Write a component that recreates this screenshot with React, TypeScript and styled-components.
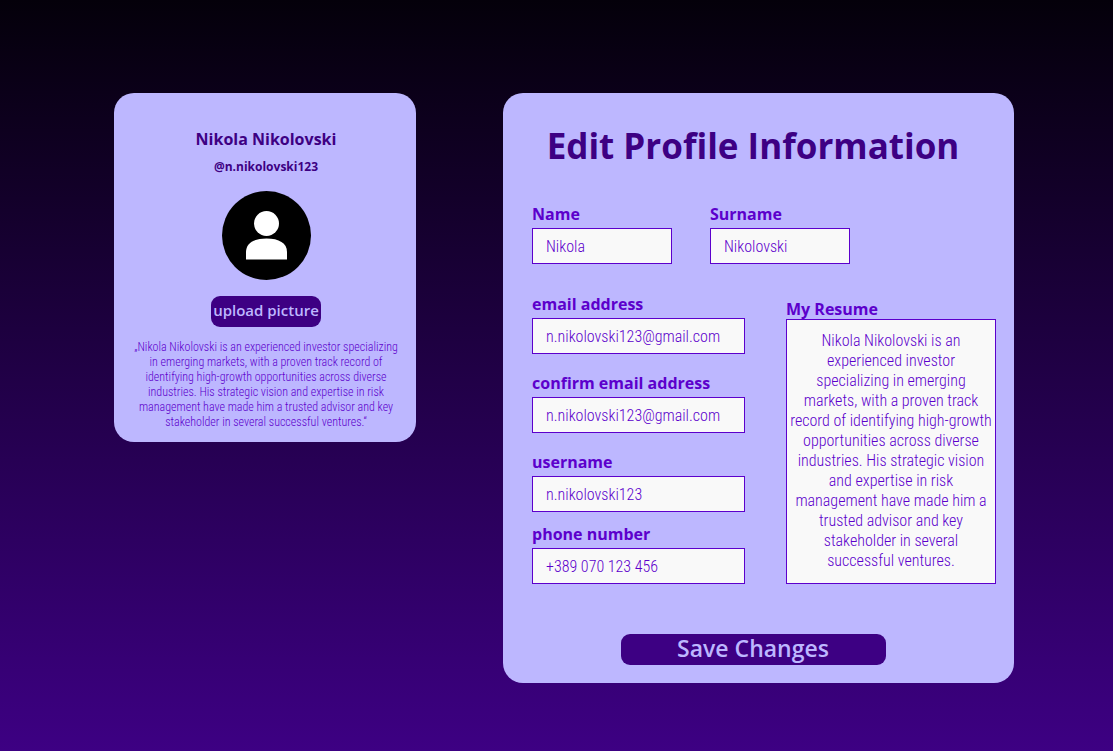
import React from "react";
import styled, { createGlobalStyle } from "styled-components";

const color = {
  card: "#bdb7ff",
  deep: "#3d0083",
  accent: "#5c00cc",
  field: "#f9f9f9",
};

const display = `"Open Sans", "Noto Sans", sans-serif`;
const narrow = `"Roboto Condensed", "Liberation Sans Narrow", "Arial Narrow", Roboto, sans-serif`;

const GlobalStyle = createGlobalStyle`
  *, *::before, *::after { box-sizing: border-box; }
  body { margin: 0; background: ${color.deep}; }
`;

const Page = styled.main`
  display: grid;
  grid-template-columns: 302fr 511fr;
  align-items: start;
  gap: 87px;
  min-height: 100vh;
  padding: 93px 99px 68px 114px;
  background: linear-gradient(180deg, #04000a 0%, ${color.deep} 100%);
  font-family: ${narrow};
  color: ${color.accent};

  @media (max-width: 960px) {
    grid-template-columns: 1fr;
    gap: 32px;
    padding: 32px;
  }
`;

const ProfileCard = styled.aside`
  display: flex;
  flex-direction: column;
  align-items: center;
  padding: 36px 11px 12px 13px;
  border-radius: 20px;
  background: ${color.card};
  text-align: center;
`;

const FullName = styled.h2`
  margin: 0 0 10px;
  font: 700 16px/20px ${display};
  color: ${color.deep};
`;

const Handle = styled.p`
  margin: 0 0 16px;
  font: 700 12px/16px ${display};
  color: ${color.deep};
`;

const Avatar = styled.svg`
  display: block;
  width: 89px;
  height: 89px;
  margin-bottom: 16px;
`;

const Button = styled.button<{ $large?: boolean }>`
  width: ${(p) => (p.$large ? 265 : 110)}px;
  height: 31px;
  padding: 0 0 3px;
  border: 0;
  border-radius: 9px;
  background: ${color.deep};
  color: ${color.card};
  font: 600 ${(p) => (p.$large ? 23 : 15)}px/28px ${display};
  white-space: nowrap;
  cursor: pointer;
`;

const Bio = styled.p`
  margin: 13px 0 0;
  font-size: 12px;
  font-weight: 300;
  line-height: 15px;
  white-space: pre-line;
`;

const EditCard = styled.form`
  padding: 31px 18px 18px 29px;
  border-radius: 20px;
  background: ${color.card};
`;

const Centered = styled.div`
  display: flex;
  justify-content: center;
  padding-right: 22px;
`;

const Title = styled.h1`
  margin: 0 0 36px;
  font: 700 35px/44px ${display};
  color: ${color.deep};
  white-space: nowrap;
`;

const NameRow = styled.div`
  display: grid;
  grid-template-columns: 140px 140px;
  gap: 38px;
  margin-bottom: 30px;
`;

const Columns = styled.div`
  display: grid;
  grid-template-columns: 213fr 210fr;
  gap: 41px;
  margin-bottom: 50px;
`;

const Stack = styled.div`
  display: flex;
  flex-direction: column;
  gap: 19px;
`;

const ContactGroup = styled.div`
  display: flex;
  flex-direction: column;
  gap: 12px;
`;

const ResumeColumn = styled.div`
  display: flex;
  flex-direction: column;
  justify-content: flex-end;
`;

const Label = styled.label`
  display: block;
  font: 700 16px/20px ${display};
  color: ${color.accent};
`;

const FieldBox = styled.div`
  display: flex;
  flex-direction: column;
  gap: 4px;
`;

const Input = styled.input`
  width: 100%;
  height: 36px;
  padding: 0 13px;
  border: 1px solid ${color.accent};
  border-radius: 0;
  background: ${color.field};
  color: ${color.accent};
  font: 300 16px/20px ${narrow};
`;

const Resume = styled.textarea`
  display: block;
  width: 100%;
  height: 265px;
  padding: 11px 0;
  border: 1px solid ${color.accent};
  border-radius: 0;
  background: ${color.field};
  color: ${color.accent};
  font: 300 16px/20px ${narrow};
  text-align: center;
  resize: none;
  overflow: hidden;
`;

type FieldProps = { id: string; label: string; value: string; type?: string };

const Field = ({ id, label, value, type = "text" }: FieldProps) => (
  <FieldBox>
    <Label htmlFor={id}>{label}</Label>
    <Input id={id} name={id} type={type} defaultValue={value} />
  </FieldBox>
);

const bio = `„Nikola Nikolovski is an experienced investor specializing
in emerging markets, with a proven track record of
identifying high-growth opportunities across diverse
industries. His strategic vision and expertise in risk
management have made him a trusted advisor and key
stakeholder in several successful ventures.“`;

const resume = `Nikola Nikolovski is an
experienced investor
specializing in emerging
markets, with a proven track
record of identifying high-growth
opportunities across diverse
industries. His strategic vision
and expertise in risk
management have made him a
trusted advisor and key
stakeholder in several
successful ventures.`;

export default function App() {
  return (
    <>
      <GlobalStyle />
      <Page>
        <ProfileCard>
          <FullName>Nikola Nikolovski</FullName>
          <Handle>@n.nikolovski123</Handle>
          <Avatar viewBox="0 0 89 89" role="img" aria-label="Profile picture">
            <circle cx="44.5" cy="44.5" r="44.5" fill="#000" />
            <circle cx="44.5" cy="32.5" r="12.5" fill="#fff" />
            <path d="M24 68.500V61C24 52 32 47.500 44.500 47.500S65 52 65 61V68.500Z" fill="#fff" />
          </Avatar>
          <Button type="button">upload picture</Button>
          <Bio>{bio}</Bio>
        </ProfileCard>

        <EditCard onSubmit={(e: React.FormEvent) => e.preventDefault()}>
          <Centered>
            <Title>Edit Profile Information</Title>
          </Centered>
          <NameRow>
            <Field id="name" label="Name" value="Nikola" />
            <Field id="surname" label="Surname" value="Nikolovski" />
          </NameRow>
          <Columns>
            <Stack>
              <Field id="email" label="email address" value="n.nikolovski123@gmail.com" type="email" />
              <Field id="confirm-email" label="confirm email address" value="n.nikolovski123@gmail.com" type="email" />
              <ContactGroup>
                <Field id="username" label="username" value="n.nikolovski123" />
                <Field id="phone" label="phone number" value="+389 070 123 456" type="tel" />
              </ContactGroup>
            </Stack>
            <ResumeColumn>
              <Label htmlFor="resume">My Resume</Label>
              <Resume id="resume" name="resume" defaultValue={resume} />
            </ResumeColumn>
          </Columns>
          <Centered>
            <Button type="submit" $large>
              Save Changes
            </Button>
          </Centered>
        </EditCard>
      </Page>
    </>
  );
}
